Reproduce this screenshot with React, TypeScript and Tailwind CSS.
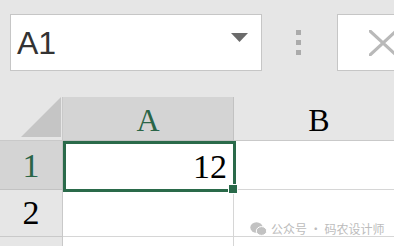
export default function App() {
  const serif = { fontFamily: '"Liberation Serif", "Times New Roman", serif' };
  return (
    <div className="relative w-[394px] h-[246px] overflow-hidden bg-[#e6e6e6]">
      {/* formula bar strip */}
      <div className="flex h-[97px] items-start pt-[14px]">
        <div className="ml-[10px] flex h-[57px] w-[252px] shrink-0 items-center justify-between border border-[#c6c6c6] bg-white pl-[6px] pr-[13px]">
          <span
            className="text-[32px] leading-none text-[#333]"
            style={{ fontFamily: '"Liberation Sans", Arial, sans-serif' }}
          >
            A1
          </span>
          <svg width="17" height="9" viewBox="0 0 17 9" className="mt-[-10px]">
            <path d="M0 0 L17 0 L8.5 9 Z" fill="#6b6b6b" />
          </svg>
        </div>
        <div className="ml-[34px] mt-[16px] flex shrink-0 flex-col gap-[5px]">
          <div className="h-[5px] w-[5px] bg-[#ababab]" />
          <div className="h-[5px] w-[5px] bg-[#ababab]" />
          <div className="h-[5px] w-[5px] bg-[#ababab]" />
        </div>
        <div className="ml-[36px] flex h-[57px] w-[90px] shrink-0 items-start border border-[#c6c6c6] bg-white pl-[31px] pt-[15px]">
          <svg width="30" height="26" viewBox="0 0 30 26" className="shrink-0">
            <path d="M1 1 L27 25 M1 25 L27 1" stroke="#b9b9b9" strokeWidth="3.2" strokeLinecap="round" />
          </svg>
        </div>
      </div>

      {/* sheet grid */}
      <div className="grid grid-cols-[63px_171px_171px] grid-rows-[44px_49px_47px_20px]" style={serif}>
        <div className="relative border-r border-b border-[#c9c9c9] bg-[#e6e6e6]">
          <svg width="40" height="40" viewBox="0 0 40 40" className="absolute right-[1px] bottom-[3px]">
            <path d="M40 0 L40 40 L0 40 Z" fill="#c5c5c5" />
          </svg>
        </div>
        <div className="flex items-end justify-center border-r border-b border-[#c2c2c2] bg-[#d4d4d4] pb-[4px] text-[32px] leading-none text-[#2a6547]">
          A
        </div>
        <div className="flex items-end justify-center border-r border-b border-[#c9c9c9] bg-[#e6e6e6] pb-[4px] text-[32px] leading-none text-black">
          B
        </div>

        <div className="flex items-end justify-center border-r border-b border-[#c2c2c2] bg-[#d4d4d4] pb-[6px] text-[34px] leading-none text-[#2a6547]">
          1
        </div>
        <div className="flex items-end justify-end border-r border-b border-[#d6d6d6] bg-white pr-[6px] pb-[5px] text-[34px] leading-none text-black">
          12
        </div>
        <div className="border-r border-b border-[#d6d6d6] bg-white" />

        <div className="flex items-end justify-center border-r border-b border-[#c9c9c9] bg-[#e6e6e6] pb-[6px] text-[34px] leading-none text-black">
          2
        </div>
        <div className="border-r border-b border-[#d6d6d6] bg-white" />
        <div className="border-r border-b border-[#d6d6d6] bg-white" />

        <div className="border-r border-[#c9c9c9] bg-[#e6e6e6]" />
        <div className="border-r border-[#d6d6d6] bg-white" />
        <div className="bg-white" />
      </div>

      {/* selection outline */}
      <div className="absolute left-[63px] top-[141px] h-[51px] w-[173px] border-[3px] border-[#2a6a4a]" />
      <div className="absolute left-[229px] top-[185px] h-[8px] w-[8px] bg-[#2a6a4a] outline outline-1 outline-white" />

      {/* watermark */}
      <div className="absolute left-[250px] top-[222px] flex items-center gap-[4px] text-[12px] leading-none text-[#bcbcbc]" style={{ fontFamily: '"Noto Sans CJK SC", sans-serif' }}>
        <svg width="17" height="14" viewBox="0 0 17 14">
          <ellipse cx="6.5" cy="5.5" rx="6.2" ry="5.2" fill="#c2c2c2" />
          <ellipse cx="11.5" cy="9" rx="5.2" ry="4.4" fill="#c2c2c2" stroke="white" strokeWidth="1" />
        </svg>
        <span>公众号 · 码农设计师</span>
      </div>
    </div>
  );
}
